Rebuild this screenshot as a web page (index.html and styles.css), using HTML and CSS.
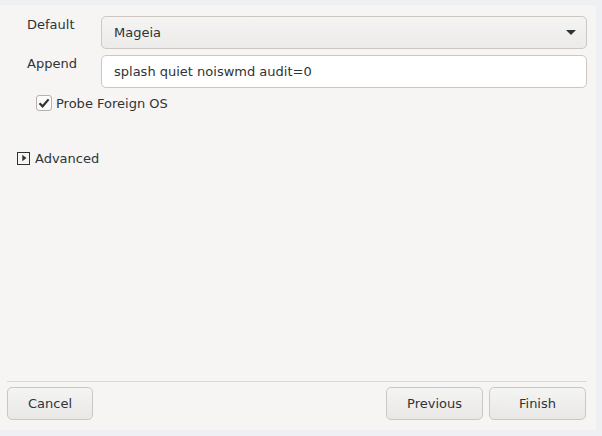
FILE: index.html
```html
<!DOCTYPE html>
<html>
<head>
<meta charset="utf-8">
<link rel="stylesheet" href="styles.css">
</head>
<body>
<div class="window">
  <div class="content">
    <div class="form">
      <div class="label">Default</div>
      <div class="combo"><span>Mageia</span><span class="caret"></span></div>
      <div class="label">Append</div>
      <div class="entry">splash quiet noiswmd audit=0</div>
    </div>
    <label class="check">
      <span class="box"><svg width="12" height="12" viewBox="0 0 12 12"><path d="M1.5 6.2 L4.6 9.3 L10.6 2.4" fill="none" stroke="#2e3436" stroke-width="2.2"/></svg></span>
      <span>Probe Foreign OS</span>
    </label>
    <div class="expander">
      <span class="exp-box"><svg width="12" height="12" viewBox="0 0 12 12"><path d="M4 2 L9 6 L4 10 Z" fill="#2e3436"/></svg></span>
      <span>Advanced</span>
    </div>
  </div>
  <div class="separator"></div>
  <div class="actions">
    <button class="btn btn-cancel">Cancel</button>
    <div class="spacer"></div>
    <button class="btn btn-wide">Previous</button>
    <button class="btn btn-wide">Finish</button>
  </div>
</div>
</body>
</html>
```
FILE: styles.css
```css
html, body {
  margin: 0;
  padding: 0;
}
body {
  background: #eef0f4;
  font-family: "DejaVu Sans", sans-serif;
  font-size: 13px;
  color: #2e3436;
  width: 602px;
  height: 436px;
  padding-top: 5px;
  box-sizing: border-box;
}
.window {
  width: 596px;
  height: 425px;
  background: #f6f5f4;
  display: flex;
  flex-direction: column;
  box-sizing: border-box;
}
.content {
  flex: 1;
  padding: 11px 9px 0 17px;
}
.form {
  display: grid;
  grid-template-columns: 84px 486px;
  row-gap: 6px;
}
.label {
  padding: 0 0 0 10px;
  line-height: 16px;
  margin-top: 1px;
}
.combo {
  height: 33px;
  box-sizing: border-box;
  border: 1px solid #cdc7c2;
  border-radius: 5px;
  background: linear-gradient(#f4f4f3, #ecebea);
  display: flex;
  align-items: center;
  justify-content: space-between;
  padding: 0 10px 0 12px;
}
.caret {
  width: 0;
  height: 0;
  border-left: 5px solid transparent;
  border-right: 5px solid transparent;
  border-top: 5px solid #2e3436;
}
.entry {
  height: 33px;
  box-sizing: border-box;
  border: 1px solid #cdc7c2;
  border-radius: 5px;
  background: #ffffff;
  display: flex;
  align-items: center;
  padding: 0 12px;
}
.check {
  display: flex;
  align-items: center;
  gap: 4px;
  margin: 7px 0 0 19px;
  height: 16px;
}
.box {
  width: 14px;
  height: 14px;
  border: 1px solid #b6b1ad;
  border-radius: 3px;
  background: #fbfbfa;
  display: flex;
  align-items: center;
  justify-content: center;
}
.expander {
  display: flex;
  align-items: center;
  gap: 5px;
  margin: 39px 0 0 0;
  height: 16px;
}
.exp-box {
  width: 11px;
  height: 11px;
  border: 1px solid #2e3436;
  display: flex;
  align-items: center;
  justify-content: center;
}
.exp-box svg {
  width: 10px;
  height: 10px;
}
.separator {
  height: 1px;
  background: #dcd8d4;
  margin: 0 9px 0 7px;
}
.actions {
  display: flex;
  gap: 6px;
  padding: 5px 10px 10px 7px;
}
.spacer {
  flex: 1;
}
.btn {
  height: 33px;
  box-sizing: border-box;
  border: 1px solid #cdc7c2;
  border-radius: 5px;
  background: linear-gradient(#f4f4f3, #e9e8e7);
  font-family: "DejaVu Sans", sans-serif;
  font-size: 13px;
  color: #2e3436;
  padding: 0;
}
.btn-cancel {
  width: 86px;
}
.btn-wide {
  width: 97px;
}
```
